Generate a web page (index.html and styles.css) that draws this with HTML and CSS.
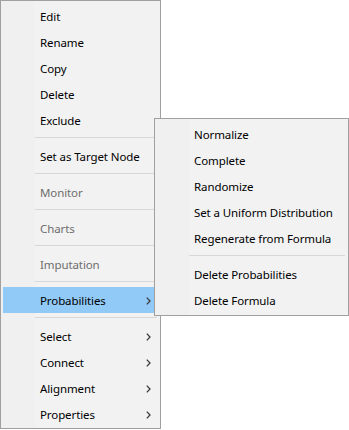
FILE: index.html
```html
<!DOCTYPE html>
<html>
<head>
<meta charset="utf-8">
<link rel="stylesheet" href="styles.css">
</head>
<body>
<div class="stage">
  <div class="menu main">
    <div class="item">Edit</div>
    <div class="item">Rename</div>
    <div class="item">Copy</div>
    <div class="item">Delete</div>
    <div class="item">Exclude</div>
    <div class="sep"></div>
    <div class="item">Set as Target Node</div>
    <div class="sep"></div>
    <div class="item disabled">Monitor</div>
    <div class="sep"></div>
    <div class="item disabled">Charts</div>
    <div class="sep"></div>
    <div class="item disabled">Imputation</div>
    <div class="sep"></div>
    <div class="item active"><span>Probabilities</span><svg class="arrow" width="5" height="8" viewBox="0 0 5 8"><path d="M0.8 0.6 L4 4 L0.8 7.4" fill="none" stroke="#3a3a3a" stroke-width="1.3"/></svg></div>
    <div class="sep"></div>
    <div class="item"><span>Select</span><svg class="arrow" width="5" height="8" viewBox="0 0 5 8"><path d="M0.8 0.6 L4 4 L0.8 7.4" fill="none" stroke="#3a3a3a" stroke-width="1.3"/></svg></div>
    <div class="item"><span>Connect</span><svg class="arrow" width="5" height="8" viewBox="0 0 5 8"><path d="M0.8 0.6 L4 4 L0.8 7.4" fill="none" stroke="#3a3a3a" stroke-width="1.3"/></svg></div>
    <div class="item"><span>Alignment</span><svg class="arrow" width="5" height="8" viewBox="0 0 5 8"><path d="M0.8 0.6 L4 4 L0.8 7.4" fill="none" stroke="#3a3a3a" stroke-width="1.3"/></svg></div>
    <div class="item"><span>Properties</span><svg class="arrow" width="5" height="8" viewBox="0 0 5 8"><path d="M0.8 0.6 L4 4 L0.8 7.4" fill="none" stroke="#3a3a3a" stroke-width="1.3"/></svg></div>
  </div>
  <div class="menu sub">
    <div class="item">Normalize</div>
    <div class="item">Complete</div>
    <div class="item">Randomize</div>
    <div class="item">Set a Uniform Distribution</div>
    <div class="item">Regenerate from Formula</div>
    <div class="sep"></div>
    <div class="item">Delete Probabilities</div>
    <div class="item">Delete Formula</div>
  </div>
</div>
</body>
</html>
```

FILE: styles.css
```css
html, body {
  margin: 0;
  padding: 0;
  background: #ffffff;
}

.stage {
  position: relative;
  width: 349px;
  height: 430px;
}

.menu {
  box-sizing: border-box;
  border: 1px solid #a0a0a0;
  background: linear-gradient(to right, #f0f0f0 34px, #f2f2f2 34px);
  font-family: "Noto Sans", "Open Sans", sans-serif;
  font-size: 11.5px;
  letter-spacing: -0.1px;
  color: #000000;
  display: flex;
  flex-direction: column;
}

.main {
  width: 161px;
  height: 429px;
  padding: 2px 0 0 0;
}

.sub {
  position: absolute;
  left: 154px;
  top: 118px;
  width: 195px;
  height: 198px;
  padding: 2px 0 1px 0;
}

.item {
  box-sizing: border-box;
  height: 26px;
  line-height: 22px;
  margin: 0 3px 0 2px;
  padding: 2px 6px 0 37px;
  display: flex;
  align-items: center;
  justify-content: space-between;
  white-space: nowrap;
}

.item.disabled {
  color: #6d6d6d;
}

.item.active {
  background: #91c9f7;
}

.arrow {
  display: block;
}

.sep {
  height: 10px;
  box-sizing: border-box;
  margin: 0 3px 0 34px;
  padding-top: 4px;
}

.sep::after {
  content: "";
  display: block;
  height: 1px;
  background: #d7d7d7;
}
```
